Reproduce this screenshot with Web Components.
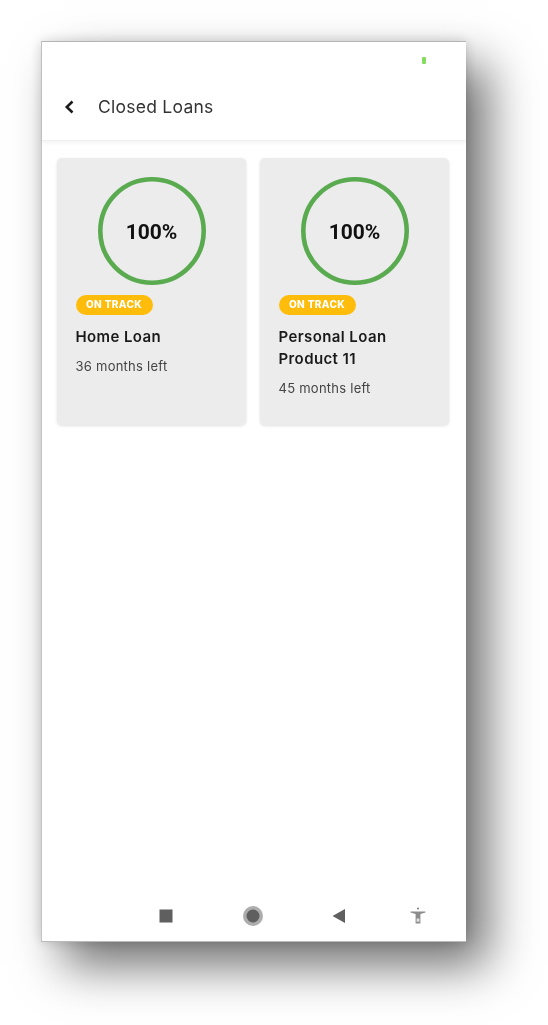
<!DOCTYPE html>
<html>
<head>
<meta charset="utf-8">
<style>
html, body { margin: 0; background: #fff; }
body { padding: 41px 0 0 41px; height: 1025px; box-sizing: border-box; overflow: hidden; font-family: "Inter", "Liberation Sans", sans-serif; }
</style>
</head>
<body>
<phone-frame>
  <app-header title="Closed Loans"></app-header>
  <loan-list>
    <loan-card percent="100%" name="Home Loan" left="36 months left"></loan-card>
    <loan-card percent="100%" name="Personal Loan Product 11" left="45 months left"></loan-card>
  </loan-list>
  <nav-bar slot="bottom"></nav-bar>
</phone-frame>

<script>
class PhoneFrame extends HTMLElement {
  constructor() {
    super();
    this.attachShadow({ mode: 'open' });
    this.shadowRoot.innerHTML = `
<style>
:host {
  display: flex;
  flex-direction: column;
  width: 425px;
  height: 901px;
  box-sizing: border-box;
  background: #fff;
  border-top: 1px solid #b5b5b5;
  border-left: 1px solid #c4c4c4;
  border-bottom: 1px solid #bbb;
  box-shadow: 22px 24px 45px rgba(0,0,0,.56), 0 0 12px rgba(0,0,0,.16);
  filter: blur(.3px);
}
.main { flex: 1; }
</style>
<div class="main"><slot></slot></div>
<slot name="bottom"></slot>`;
  }
}

class AppHeader extends HTMLElement {
  constructor() {
    super();
    this.attachShadow({ mode: 'open' });
    this.shadowRoot.innerHTML = `
<style>
:host {
  display: block;
  height: 99px;
  box-sizing: border-box;
  border-bottom: 1px solid #f0f0f0;
  box-shadow: 0 2px 4px rgba(0,0,0,.05);
}
.status { display: flex; justify-content: flex-end; height: 15px; padding: 15px 40px 0 0; }
.dot { width: 4px; height: 7px; background: #86dc5e; border-radius: 1px; }
.row { display: flex; align-items: center; gap: 22px; padding: 23px 0 0 21px; }
svg { display: block; width: 13px; height: 16px; }
h1 { margin: 0; font: 400 17.5px/24px "Inter", "Liberation Sans", sans-serif; color: #333; letter-spacing: .25px; }
</style>
<div class="status"><div class="dot"></div></div>
<div class="row">
  <svg viewBox="0 0 13 16"><path d="M9.5 2.5 L3.8 8 L9.5 13.5" fill="none" stroke="#1c1c1c" stroke-width="2.6"/></svg>
  <h1></h1>
</div>`;
    this.shadowRoot.querySelector('h1').textContent = this.getAttribute('title');
  }
}

class LoanList extends HTMLElement {
  constructor() {
    super();
    this.attachShadow({ mode: 'open' });
    this.shadowRoot.innerHTML = `
<style>
:host {
  display: grid;
  grid-template-columns: 189px 189px;
  gap: 14px;
  padding: 17px 0 0 15px;
}
</style>
<slot></slot>`;
  }
}

class LoanCard extends HTMLElement {
  constructor() {
    super();
    this.attachShadow({ mode: 'open' });
    this.shadowRoot.innerHTML = `
<style>
:host {
  display: block;
  height: 267px;
  box-sizing: border-box;
  padding: 19px 18.5px 0;
  background: #ececec;
  border-radius: 5px;
  box-shadow: 0 1px 3px rgba(0,0,0,.12);
}
.ring { position: relative; width: 108px; height: 108px; margin: 0 auto 10px; display: flex; align-items: center; justify-content: center; }
.ring svg { position: absolute; inset: 0; }
.pct { position: relative; top: 1px; font: 700 21px/24px "Roboto", "Liberation Sans", sans-serif; color: #111; }
.badge {
  display: inline-block;
  width: 77px;
  height: 20px;
  border-radius: 10px;
  background: #ffbc0a;
  color: #fff;
  font: 800 10px/19px "Inter", "Liberation Sans", sans-serif;
  letter-spacing: .4px;
  text-align: center;
  vertical-align: top;
}
.name { margin: 11px 0 0; font: 600 15px/22px "Inter", "Liberation Sans", sans-serif; color: #1a1a1a; letter-spacing: .4px; }
.left { margin: 9px 0 0; font: 400 13px/18px "Inter", "Liberation Sans", sans-serif; color: #444; letter-spacing: .25px; }
</style>
<div class="ring">
  <svg viewBox="0 0 108 108"><circle cx="54" cy="54" r="51.7" fill="none" stroke="#5aab50" stroke-width="4.6"/></svg>
  <span class="pct"></span>
</div>
<span class="badge">ON TRACK</span>
<p class="name"></p>
<p class="left"></p>`;
    this.shadowRoot.querySelector('.pct').textContent = this.getAttribute('percent');
    this.shadowRoot.querySelector('.name').textContent = this.getAttribute('name');
    this.shadowRoot.querySelector('.left').textContent = this.getAttribute('left');
  }
}

class NavBar extends HTMLElement {
  constructor() {
    super();
    this.attachShadow({ mode: 'open' });
    this.shadowRoot.innerHTML = `
<style>
:host {
  display: flex;
  align-items: center;
  height: 50px;
  padding: 0 0 0 116px;
  box-sizing: border-box;
}
svg { display: block; flex: none; }
</style>
<svg width="16" height="16" viewBox="0 0 16 16"><rect x="1.5" y="1.5" width="13" height="13" fill="#5f5f5f"/></svg>
<svg style="margin-left:68px" width="22" height="22" viewBox="0 0 22 22"><circle cx="11" cy="11" r="10" fill="#adadad"/><circle cx="11" cy="11" r="6.5" fill="#5f5f5f"/></svg>
<svg style="margin-left:67px" width="16" height="16" viewBox="0 0 16 16"><path d="M1.5 8 L14 1 V15 Z" fill="#5f5f5f"/></svg>
<svg style="margin-left:62px" width="18" height="20" viewBox="0 0 18 20"><circle cx="9" cy="2.4" r="1" fill="#777"/><path d="M1.5 5.4 H16.5 V6.4 L11.4 8 V17.5 H6.6 V8 L1.5 6.4 Z" fill="#8c8c8c"/><rect x="7.6" y="12.5" width="2.8" height="3.2" fill="#e2e2e2"/></svg>`;
  }
}

customElements.define('phone-frame', PhoneFrame);
customElements.define('app-header', AppHeader);
customElements.define('loan-list', LoanList);
customElements.define('loan-card', LoanCard);
customElements.define('nav-bar', NavBar);
</script>
</body>
</html>
